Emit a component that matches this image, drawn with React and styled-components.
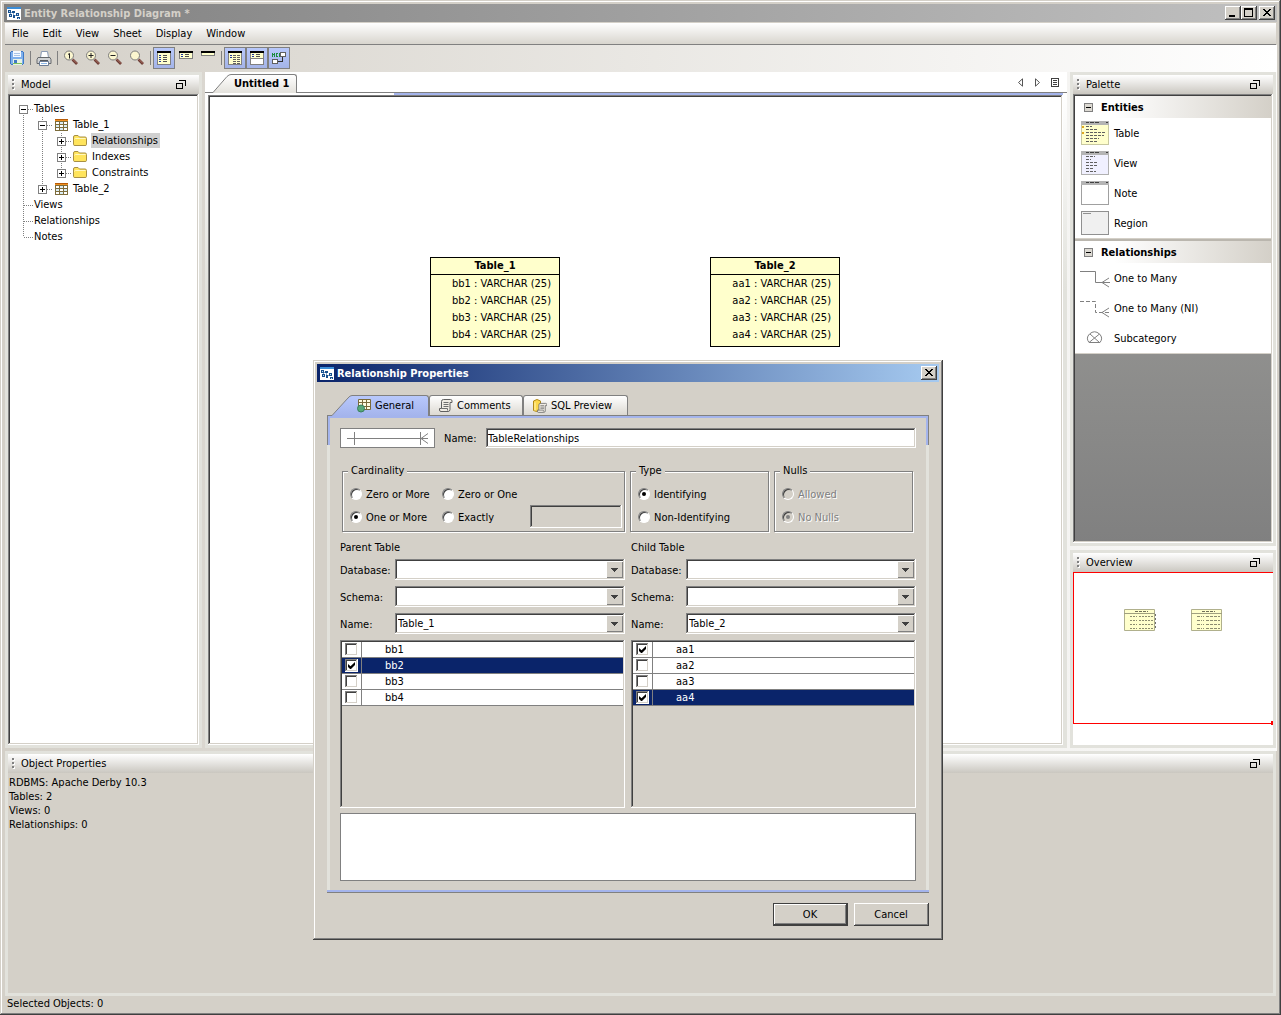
import React, { useState } from "react";
import styled, { createGlobalStyle, css } from "styled-components";

const GlobalStyle = createGlobalStyle`
  *, *::before, *::after {
    box-sizing: border-box;
  }

  body {
    margin: 0;
    background: #d4d0c8;
  }

  body, button, input, select, textarea {
    font-family: "DejaVu Sans Condensed", "DejaVu Sans", sans-serif;
    font-size: 11px;
    line-height: 14px;
    color: #000;
  }

  button, input, select, textarea {
    margin: 0;
    border-radius: 0;
  }

  svg {
    display: block;
    flex: none;
  }
`;

/* the bevels are 2px deep, so anything inside needs at least 2px of padding */
const sunken = css`
  border: 0;
  box-shadow: inset -1px -1px #fff, inset 1px 1px #808080,
    inset -2px -2px #d4d0c8, inset 2px 2px #404040;
`;

const raised = css`
  box-shadow: inset -1px -1px #404040, inset 1px 1px #fff,
    inset -2px -2px #808080;
`;

/* Window frame */

const Frame = styled.div`
  position: relative;
  display: flex;
  flex-direction: column;
  min-height: 100vh;
  padding: 4px;
  background: #d4d0c8;
  box-shadow: inset -1px -1px #404040, inset 1px 1px #d4d0c8,
    inset -2px -2px #808080, inset 2px 2px #fff;
`;

const TitleBar = styled.header`
  display: flex;
  align-items: center;
  height: 18px;
  padding: 0 2px 0 3px;
  background: ${props =>
    props.$active
      ? "linear-gradient(to right, #0a246a, #a6caf0)"
      : "linear-gradient(to right, #808080, #c0c0c0)"};
  color: ${props => (props.$active ? "#fff" : "#d4d0c8")};
`;

const TitleText = styled.h1`
  flex: 1;
  margin: 0 0 0 3px;
  padding-top: 2px;
  font-size: 11px;
  line-height: 14px;
  font-weight: bold;
`;

const TitleButton = styled.button`
  width: 16px;
  height: 14px;
  padding: 0;
  border: 0;
  background: #d4d0c8;
  ${raised}

  & + &:last-child {
    margin-left: 2px;
  }
`;

const MenuBar = styled.nav`
  display: flex;
  align-items: center;
  height: 22px;
  margin: 1px 1px 0;
  border-bottom: 1px solid #808080;
  background: linear-gradient(#fff, #d8d5ce);
`;

const MenuItem = styled.button`
  padding: 2px 7px;
  border: 0;
  background: none;
`;

const Toolbar = styled.div`
  display: flex;
  align-items: center;
  height: 27px;
  padding: 0 2px 1px;
  background: linear-gradient(to right, #d4d0c8, #fff);
`;

const ToolButton = styled.button`
  display: flex;
  align-items: center;
  justify-content: center;
  width: 22px;
  height: 22px;
  padding: 0;
  border: 1px solid ${props => (props.$pressed ? "#808080" : "transparent")};
  background: ${props =>
    props.$pressed ? "linear-gradient(#b8c8fa, #a4b4e8)" : "none"};
`;

const ToolSeparator = styled.span`
  width: 1px;
  height: 14px;
  margin: 0 2px;
  background: #808080;
`;

/* Docked panels */

const Workspace = styled.main`
  flex: 1;
  display: flex;
  gap: 3px;
  padding: 0 1px 3px;
  background: linear-gradient(to right, #d4d0c8, #fbfbfa);
`;

const PanelFrame = styled.section`
  display: flex;
  flex-direction: column;
  border: 3px solid #e2e2dc;
  background: #d4d0c8;
`;

const ModelPanel = styled(PanelFrame)`
  width: 197px;
`;

const SideColumn = styled.div`
  display: flex;
  flex-direction: column;
  gap: 4px;
  width: 206px;
`;

const PalettePanel = styled(PanelFrame)`
  flex: 1;
`;

const PropertiesPanel = styled(PanelFrame)`
  height: 245px;
  margin: 0 1px;
`;

const PanelHeader = styled.div`
  display: flex;
  align-items: center;
  height: 19px;
  padding: 0 13px 0 4px;
  background: linear-gradient(#fff, #cac7c0);
`;

const PanelTitle = styled.h2`
  flex: 1;
  margin: 0 0 0 6px;
  font-size: 11px;
  line-height: 14px;
  font-weight: normal;
`;

const FloatButton = styled.button`
  padding: 0;
  border: 0;
  background: none;
`;

const PropertyList = styled.ul`
  margin: 0;
  padding: 3px 1px;
  list-style: none;
`;

const StatusBar = styled.footer`
  height: 15px;
  padding: 1px 3px 0;
`;

/* Model tree */

const Tree = styled.ul`
  flex: 1;
  margin: 0;
  padding: 7px 6px;
  list-style: none;
  background: #fff;
  ${sunken}
`;

const TreeRow = styled.li`
  display: flex;
  align-items: center;
  height: 16px;
`;

const dots = direction =>
  `repeating-linear-gradient(to ${direction}, #808080 0 1px, transparent 1px 2px)`;

const Guide = styled.span`
  display: flex;
  align-items: center;
  justify-content: center;
  flex: none;
  width: 19px;
  height: 16px;
  background-image: ${props => (props.$up ? dots("bottom") : "none")},
    ${props => (props.$down ? dots("bottom") : "none")},
    ${props => (props.$right ? dots("right") : "none")};
  background-size: 1px 8px, 1px 8px, 9px 1px;
  background-position: 9px 0, 9px 8px, 10px 8px;
  background-repeat: no-repeat;
`;

const TreeIcon = styled.span`
  width: 16px;
  margin: 0 2px;
`;

const TreeLabel = styled.span`
  align-self: flex-start;
  height: 15px;
  padding: 1px 2px 0 1px;
  background: ${props => (props.$selected ? "#d0d0d0" : "none")};
`;

/* Diagram sheet */

const Sheet = styled.section`
  flex: 1;
  display: flex;
  flex-direction: column;
  background: #fff;
`;

const SheetTabs = styled.div`
  display: flex;
  align-items: flex-end;
  height: 21px;
  padding: 0 8px;
  border-bottom: 1px solid #808080;
  background: #fff;
`;

const SheetTab = styled.button`
  display: flex;
  height: 19px;
  margin-bottom: -1px;
  padding: 0;
  border: 0;
  background: none;
  font-weight: bold;
`;

const SheetTabLabel = styled.span`
  height: 19px;
  padding: 2px 7px 0 3px;
  border-top: 1px solid #808080;
  border-right: 1px solid #808080;
  border-top-right-radius: 3px;
  background: linear-gradient(#fff, #e4e2dc);
`;

const SheetTools = styled.div`
  display: flex;
  align-items: center;
  gap: 10px;
  height: 20px;
  margin-left: auto;
`;

const SheetBody = styled.div`
  flex: 1;
  display: flex;
  padding: 2px 4px 3px 3px;
  background: linear-gradient(to right, #fff 0 22%, #a4b4ec 22%)
      no-repeat 0 0 / calc(100% - 4px) 2px,
    linear-gradient(#fff, #e2e2dc 30%);
`;

const Canvas = styled.div`
  position: relative;
  flex: 1;
  background: #fff;
  ${sunken}
`;

const EntityNode = styled.article`
  position: absolute;
  left: ${props => props.$x}px;
  top: ${props => props.$y}px;
  width: 130px;
  height: 90px;
  border: 1px solid #000;
  background: #ffffcc;
`;

const EntityTitle = styled.h3`
  margin: 0;
  border-bottom: 1px solid #000;
  font-size: 11px;
  line-height: 16px;
  text-align: center;
`;

const EntityField = styled.div`
  padding-right: 8px;
  line-height: 17px;
  text-align: right;
`;

/* Palette */

const PaletteBody = styled.div`
  flex: 1;
  padding: 2px;
  background: linear-gradient(#a4a4a0, #808080);
  ${sunken}
`;

const PaletteGroup = styled.div`
  border-bottom: 1px solid #d4d0c8;
  background: #fff;

  & + & {
    border-top: 2px solid #bab6ae;
  }
`;

const PaletteHeading = styled.button`
  display: flex;
  align-items: center;
  gap: 8px;
  width: 100%;
  height: 22px;
  padding: 0 9px;
  border: 0;
  background: linear-gradient(to right, #fff 20%, #d4d0c8);
  font-weight: bold;
`;

const PaletteItem = styled.button`
  display: flex;
  align-items: center;
  gap: 4px;
  width: 100%;
  height: 30px;
  padding: 0 5px;
  border: 0;
  background: #fff;
`;

const Caption = styled.span`
  padding-top: 2px;
`;

const OverviewBody = styled.div`
  height: 173px;
  background: #fff;
`;

const OverviewPage = styled.div`
  position: relative;
  display: flex;
  gap: 35px;
  height: 152px;
  padding: 36px 0 0 50px;
  border: 1px solid #f00;
  border-right: 0;

  &::after {
    content: "";
    position: absolute;
    right: 0;
    bottom: -2px;
    width: 2px;
    height: 4px;
    background: #f00;
  }
`;

/* Dialog */

const DialogFrame = styled.div`
  position: absolute;
  left: 313px;
  top: 360px;
  width: 630px;
  padding: 4px;
  background: #d4d0c8;
  box-shadow: inset -1px -1px #404040, inset 1px 1px #d4d0c8,
    inset -2px -2px #808080, inset 2px 2px #fff;
`;

const DialogContent = styled.form`
  padding: 13px 10px 10px;
`;

const DialogTabs = styled.div`
  display: flex;
  height: 21px;
  margin-bottom: -1px;
  padding-left: 5px;
`;

const DialogTab = styled.button`
  display: flex;
  align-items: center;
  gap: 4px;
  width: ${props => props.$width}px;
  height: 20px;
  padding: 0 0 0 9px;
  border: 1px solid #808080;
  border-bottom: 0;
  border-radius: 3px 3px 0 0;
  background: linear-gradient(#fff, #dcd9d2);
  white-space: nowrap;

  ${props =>
    props.$active &&
    css`
      height: 21px;
      padding-left: 5px;
      border-left: 0;
      border-radius: 0 3px 0 0;
      background: linear-gradient(#b8c8fc, #a4b4ec);
    `}
`;

const line = (color, position, size) =>
  `linear-gradient(${color}, ${color}) ${position} / ${size} no-repeat`;

const TabPage = styled.div`
  padding: 13px 13px 12px;
  background: ${[
    line("#808080", "0 100%", "100% 1px"),
    line("#a4b4ec", "0 calc(100% - 1px)", "100% 2px"),
    line("#808080", "0 0", "100% 1px"),
    line("#808080", "0 0", "1px 30px"),
    line("#808080", "100% 0", "1px 30px"),
    line("#a4b4ec", "0 0", "3px 30px"),
    line("#a4b4ec", "100% 0", "3px 30px"),
    line("#a4b4ec", "0 1px", "100% 2px"),
    line("#e2e2dc", "0 0", "3px 100%"),
    line("#e2e2dc", "100% 0", "3px 100%")
  ].join(", ")};
`;

const NameRow = styled.div`
  display: flex;
  align-items: center;
  gap: 9px;
  height: 20px;
`;

const RelationPreview = styled.div`
  width: 95px;
  height: 20px;
  border: 1px solid #808080;
  background: #fff;
`;

const NameLabel = styled.label`
  width: 33px;
  padding-top: 2px;
  white-space: nowrap;
`;

const TextField = styled.input`
  flex: 1;
  width: 100%;
  height: 20px;
  padding: 2px 2px 1px;
  background: ${props => (props.disabled ? "#d4d0c8" : "#fff")};
  ${sunken}
`;

const OptionRow = styled.div`
  display: grid;
  grid-template-columns: minmax(0, 1fr) 139px 139px;
  gap: 5px;
  margin: 16px 3px 8px 2px;
`;

const OptionGroup = styled.fieldset`
  display: grid;
  grid-template-columns: ${props => (props.$wide ? "92px 88px 1fr" : "1fr")};
  grid-auto-rows: 23px;
  align-items: center;
  min-width: 0;
  margin: 0;
  padding: 4px 2px 3px 7px;
  border: 1px solid #808080;
  box-shadow: 1px 1px #fff, inset 1px 1px #fff;
`;

const Legend = styled.legend`
  padding: 0 3px;
  margin-left: -2px;
  background: #d4d0c8;
`;

const RadioLabel = styled.label`
  display: flex;
  align-items: center;
  gap: 4px;
  color: ${props => (props.$disabled ? "#808080" : "#000")};
  text-shadow: ${props => (props.$disabled ? "1px 1px #fff" : "none")};
  white-space: nowrap;
`;

const Radio = styled.input`
  appearance: none;
  display: grid;
  place-items: center;
  flex: none;
  width: 12px;
  height: 12px;
  border: 1px solid;
  border-color: #808080 #fff #fff #808080;
  border-radius: 50%;
  background: ${props => (props.disabled ? "#d4d0c8" : "#fff")};
  box-shadow: inset 1px 1px #404040;

  &:checked::after {
    content: "";
    width: 4px;
    height: 4px;
    border-radius: 50%;
    background: ${props => (props.disabled ? "#808080" : "#000")};
  }
`;

const ExactField = styled(TextField)`
  grid-column: 3;
  grid-row: 2;
  height: 23px;
`;

const TablePair = styled.div`
  display: grid;
  grid-template-columns: 1fr 1fr;
  gap: 6px;
`;

const SideTitle = styled.h4`
  margin: 0 0 4px;
  padding-top: 1px;
  font-size: 11px;
  line-height: 14px;
  font-weight: normal;
`;

const FieldRow = styled.div`
  display: grid;
  grid-template-columns: 55px 1fr;
  align-items: center;
  height: 21px;
  margin-bottom: 6px;
`;

const FieldLabel = styled.label`
  padding-top: 2px;
`;

const SelectBox = styled.div`
  display: grid;
  height: 21px;
  padding: 2px;
  background: #fff;
  ${sunken}

  & > * {
    grid-area: 1 / 1;
  }
`;

const Select = styled.select`
  appearance: none;
  width: 100%;
  height: 17px;
  padding: 1px 18px 0 1px;
  border: 0;
  outline: 0;
  background: none;
`;

const SelectArrow = styled.span`
  display: flex;
  align-items: center;
  justify-content: center;
  justify-self: end;
  width: 17px;
  height: 17px;
  background: #d4d0c8;
  box-shadow: inset 1px 1px #fff, inset -1px -1px #808080;
  pointer-events: none;
`;

const ColumnList = styled.div`
  height: 168px;
  padding: 2px;
  ${sunken}
`;

const ColumnTable = styled.table`
  width: 100%;
  border-spacing: 0;
`;

const ColumnRow = styled.tr`
  height: 16px;
  background: ${props => (props.$selected ? "#0a246a" : "#fff")};
  color: ${props => (props.$selected ? "#fff" : "#000")};
`;

const CheckCell = styled.td`
  width: 20px;
  padding: 0 0 0 3px;
  border-right: 1px solid #808080;
  border-bottom: 1px solid #808080;
`;

const NameCell = styled.td`
  padding: 0 0 0 23px;
  border-bottom: 1px solid #808080;
  line-height: 15px;
`;

const CheckBox = styled.input`
  appearance: none;
  display: grid;
  place-items: center;
  width: 13px;
  height: 13px;
  background: #fff;
  ${sunken}

  &:checked::after {
    content: "";
    width: 7px;
    height: 7px;
    background: #000;
    clip-path: polygon(0 29%, 0 70%, 29% 100%, 43% 100%, 100% 43%, 100% 0, 36% 62%);
  }
`;

const Description = styled.textarea`
  display: block;
  width: 100%;
  height: 68px;
  margin-top: 5px;
  border: 1px solid #808080;
  background: #fff;
  resize: none;
`;

const DialogButtons = styled.div`
  display: flex;
  justify-content: flex-end;
  gap: 6px;
  margin-top: 10px;
`;

const DialogButton = styled.button`
  width: 75px;
  height: 23px;
  padding: 0 1px 0 0;
  border: ${props => (props.$default ? "1px solid #404040" : "0")};
  background: #d4d0c8;
  ${raised}
`;

/* Icons */

const AppIcon = () => (
  <svg width="14" height="13" viewBox="0 0 14 13" shapeRendering="crispEdges">
    <rect width="14" height="13" fill="#fff" />
    <rect width="14" height="2" fill="#3c8ed8" />
    <path d="M3 4h1v1h2v1H4v2H3zM6 6h1v2h2v1H6z" fill="#7ca4cc" />
    <path
      d="M1 3h3v3H1zM5 4h3v2H5zM2 7h3v3H2zM6 8h2v3H6zM9 6h3v3H9zM10 10h3v2h-3z"
      fill="#17518f"
    />
    <path d="M2 4h1v1H2zM10 7h1v1h-1zM11 11h1v1h-1zM3 8h1v1H3z" fill="#bcd8f4" />
  </svg>
);

const MinimizeIcon = () => (
  <svg width="16" height="14" viewBox="0 0 16 14">
    <path d="M4 9h6v2H4z" />
  </svg>
);

const MaximizeIcon = () => (
  <svg width="16" height="14" viewBox="0 0 16 14">
    <path d="M3 2h9v9H3zM4 4v6h7V4z" fillRule="evenodd" />
  </svg>
);

const CloseIcon = () => (
  <svg width="16" height="14" viewBox="0 0 16 14" shapeRendering="crispEdges">
    <path d="M4 3h2v1h1v1h2V4h1V3h2v1h-1v1h-1v1H9v1h1v1h1v1h1v1h-2V9H9V8H7v1H6v1H4V9h1V8h1V7h1V6H6V5H5V4H4z" />
  </svg>
);

const FloatIcon = () => (
  <svg width="10" height="9" viewBox="0 0 10 9" shapeRendering="crispEdges">
    <path d="M3 0h7v6H9V1H3zM0 3h7v6H0zM1 4v4h5V4z" fillRule="evenodd" />
  </svg>
);

const Grip = () => (
  <svg width="3" height="11" viewBox="0 0 3 11" shapeRendering="crispEdges">
    <path d="M1 1h2v2H1zM1 5h2v2H1zM1 9h2v2H1z" fill="#fff" />
    <path d="M0 0h2v2H0zM0 4h2v2H0zM0 8h2v2H0z" fill="#808080" />
  </svg>
);

const SaveIcon = () => (
  <svg width="14" height="14" viewBox="0 0 14 14" shapeRendering="crispEdges">
    <path d="M1 0h12v1h1v12h-1v1H1v-1H0V1h1z" fill="#3f78c4" />
    <path d="M1 1h12v12H1z" fill="#7fb0ec" />
    <path d="M3 0h8v6H3z" fill="#f4f9ff" />
    <path d="M4 2h6v1H4zM4 4h6v1H4z" fill="#a9c4e6" />
    <path d="M3 8h9v6H3z" fill="#e8f2e4" />
    <path d="M4 9h3v4H4z" fill="#3f78c4" />
    <path d="M3 12h9v1H3z" fill="#7cc05c" />
  </svg>
);

const PrintIcon = () => (
  <svg width="16" height="15" viewBox="0 0 16 15">
    <path d="M4.5 6.5l1-6h6l1 6z" fill="#fff" stroke="#8a9ab4" />
    <path d="M2 6.500h12l1 2v4H1v-4z" fill="#d0d2d4" stroke="#66696c" />
    <path d="M4 9h8v1H4z" fill="#55585c" />
    <path d="M3.500 10.500h9v4h-9z" fill="#fff" stroke="#6c7c94" />
    <path d="M5 12.500h6" stroke="#8cb8e8" />
  </svg>
);

const ZoomIcon = ({ mark }) => (
  <svg width="16" height="16" viewBox="0 0 16 16">
    <path d="M9.500 9.500l4.500 4.500" stroke="#6c3c34" strokeWidth="2.600" />
    <path d="M10 9.500l4 4" stroke="#b07468" strokeWidth="1" />
    <circle cx="6" cy="5.500" r="4.500" fill="#fbf6cf" stroke="#7c7c7c" />
    {mark && <path d={mark} stroke="#222" strokeWidth="1" fill="none" />}
  </svg>
);

const DetailIcon = ({ rows, tall, split }) => (
  <svg width="16" height="16" viewBox="0 0 16 16" shapeRendering="crispEdges">
    <path d={`M1.500 1.500h13v${tall}h-13z`} fill="#ffffcc" stroke="#808080" />
    {split && <path d="M2 8h12v6H2z" fill="#fff" />}
    {split && <path d="M2 8h12v1H2z" fill="#808080" />}
    <path d="M1 1h14v2H1z" fill="#000" />
    {rows.map(y => (
      <g key={y}>
        <path d={`M3 ${y}h2v1H3z`} fill="#2038a0" />
        <path d={`M7 ${y}h4v1H7z`} fill="#505050" />
      </g>
    ))}
  </svg>
);

const HeaderOnlyIcon = () => (
  <svg width="16" height="16" viewBox="0 0 16 16" shapeRendering="crispEdges">
    <path d="M1.500 1.500h13v4h-13z" fill="#ffffcc" stroke="#808080" />
    <path d="M1 1h14v2H1z" />
  </svg>
);

const ColumnsIcon = () => (
  <svg width="16" height="16" viewBox="0 0 16 16" shapeRendering="crispEdges">
    <path d="M1.500 1.500h13v13h-13z" fill="#ffffcc" stroke="#808080" />
    <path d="M1 1h14v2H1z" />
    <path d="M3 5h2v1H3zM3 7h2v1H3z" fill="#2038a0" />
    <path
      d="M6 5h3v1H6zM10 5h3v1h-3zM6 7h3v1H6zM10 7h3v1h-3zM6 9h3v1H6zM10 9h3v1h-3zM6 11h3v1H6zM10 11h3v1h-3zM6 13h3v1H6zM10 13h3v1h-3z"
      fill="#606060"
    />
  </svg>
);

const KeysIcon = () => (
  <svg width="16" height="16" viewBox="0 0 16 16" shapeRendering="crispEdges">
    <path d="M1.500 9.500h5v4h-5z" fill="#fff" stroke="#606060" />
    <path d="M9.500 2.500h5v4h-5z" fill="#fff" stroke="#606060" />
    <path d="M7 11.500h4.500v-5" stroke="#303030" fill="none" />
    <path
      d="M1 3h1v4H1zM2 4h1v1H2zM3 3h1v4H3zM5 3h2v1H5zM5 4h1v2H5zM5 6h2v1H5zM8 3h1v4H8z"
      fill="#1c8c3c"
    />
  </svg>
);

const TreeToggle = ({ open }) => (
  <svg width="9" height="9" viewBox="0 0 9 9" shapeRendering="crispEdges">
    <path d="M.5.5h8v8h-8z" fill="#fff" stroke="#808080" />
    <path d={open ? "M2 4h5v1H2z" : "M2 4h5v1H2zM4 2h1v5H4z"} />
  </svg>
);

const GridIcon = () => (
  <svg width="16" height="13" viewBox="0 0 16 13" shapeRendering="crispEdges">
    <path d="M1 0h13v12H1z" fill="#7c6c3c" />
    <path d="M1 0h13v2H1z" fill="#f09020" />
    <path d="M1 0h13v1H1z" fill="#b85c08" />
    <path
      d="M2 3h3v2H2zM6 3h3v2H6zM10 3h3v2h-3zM2 6h3v2H2zM6 6h3v2H6zM10 6h3v2h-3zM2 9h3v2H2zM6 9h3v2H6zM10 9h3v2h-3z"
      fill="#fff"
    />
    <path d="M6 3h3v2H6zM2 6h3v2H2zM10 6h3v2h-3zM6 9h3v2H6z" fill="#d8ecf4" />
  </svg>
);

const FolderIcon = () => (
  <svg width="16" height="12" viewBox="0 0 16 12">
    <path
      d="M.5 2q0-1.500 1.500-1.500h3L6.500 2H12q1.500 0 1.500 1.500v6q0 1-1.500 1H2q-1.500 0-1.500-1z"
      fill="#ffe45c"
      stroke="#a89044"
    />
    <path d="M1.500 4.500q0-1 1-1h10" stroke="#fff8c0" fill="none" />
  </svg>
);

const PrevIcon = () => (
  <svg width="7" height="9" viewBox="0 0 7 9">
    <path d="M5.500.8v7.400L1.500 4.500z" fill="#fff" stroke="#555" />
  </svg>
);

const NextIcon = () => (
  <svg width="7" height="9" viewBox="0 0 7 9">
    <path d="M1.500.8v7.400l4-3.700z" fill="#fff" stroke="#555" />
  </svg>
);

const ListIcon = () => (
  <svg width="8" height="9" viewBox="0 0 8 9" shapeRendering="crispEdges">
    <path d="M.5.5h7v8h-7z" fill="#fff" stroke="#404040" />
    <path d="M2 2h4v1H2zM2 4h4v1H2zM2 6h4v1H2z" fill="#404040" />
  </svg>
);

const SheetTabEdge = () => (
  <svg width="18" height="19" viewBox="0 0 18 19">
    <defs>
      <linearGradient id="sheetEdge" x2="0" y2="1">
        <stop stopColor="#fff" />
        <stop offset="1" stopColor="#e4e2dc" />
      </linearGradient>
    </defs>
    <path d="M0 18.500L14 2.500Q16 .5 18 .5V19H0z" fill="url(#sheetEdge)" />
    <path d="M0 18.500L14 2.500Q16 .5 18 .5" fill="none" stroke="#808080" />
  </svg>
);

const DialogTabEdge = () => (
  <svg width="20" height="21" viewBox="0 0 20 21">
    <defs>
      <linearGradient id="dialogEdge" x2="0" y2="1">
        <stop stopColor="#b8c8fc" />
        <stop offset="1" stopColor="#a4b4ec" />
      </linearGradient>
    </defs>
    <path d="M0 20.500L16 3Q18 .5 20 .5V21H0z" fill="url(#dialogEdge)" />
    <path d="M0 20.500L16 3Q18 .5 20 .5" fill="none" stroke="#808080" />
  </svg>
);

const GeneralIcon = () => (
  <svg width="14" height="14" viewBox="0 0 14 14">
    <path d="M1.500.5h12v10h-12z" fill="#fffbe0" stroke="#7a6a3a" />
    <path d="M5.500.5v10M9.500.5v10M1.500 3.500h12M1.500 7.500h12" stroke="#7a6a3a" />
    <circle cx="4" cy="9.500" r="3.500" fill="#58a878" stroke="#38805c" />
  </svg>
);

const ScrollShape = () => (
  <g>
    <path
      d="M2.500 9.500V2.500q0-2 2-2h7q1.500 0 1.500 1.500v1.500h-2v7q0 2-2 2H2Q.5 12.500.5 11V9.500z"
      fill="#f0ece4"
      stroke="#606060"
    />
    <path
      d="M4.500 3.500h5M4.500 5.500h5M4.500 7.500h5M2.500 9.500h6v2"
      stroke="#707070"
      fill="none"
    />
  </g>
);

const CommentsIcon = () => (
  <svg width="14" height="14" viewBox="0 0 14 14">
    <ScrollShape />
  </svg>
);

const SqlIcon = () => (
  <svg width="14" height="14" viewBox="0 0 14 14">
    <path d="M.5 2v9.500q3 2 7 0V2q-3.500-3-7 0z" fill="#fcd84c" stroke="#b08818" />
    <path d="M2 3.500v8" stroke="#fff6b8" />
    <g transform="translate(4 4) scale(.75)">
      <ScrollShape />
    </g>
  </svg>
);

const RelationLine = () => (
  <svg width="93" height="18" viewBox="0 0 93 18">
    <path
      d="M6 9.500h81M13.500 3v13M79.500 3v13M87 4.500l-7 5 7 5"
      fill="none"
      stroke="#808080"
    />
  </svg>
);

const DropArrow = () => (
  <svg width="7" height="4" viewBox="0 0 7 4" shapeRendering="crispEdges">
    <path d="M0 0h7v1H6v1H5v1H4v1H3V3H2V2H1V1H0z" fill="#404040" />
  </svg>
);

const GroupToggle = () => (
  <svg width="9" height="9" viewBox="0 0 9 9" shapeRendering="crispEdges">
    <path d="M.5.5h8v8h-8z" fill="#dcd9d2" stroke="#808080" />
    <path d="M2 4h5v1H2z" />
  </svg>
);

const EntityThumb = ({ fill, stroke, lines, keyed }) => (
  <svg width="30" height="24" viewBox="0 0 30 24" shapeRendering="crispEdges">
    <path d="M1.500.5h27v23h-27z" fill={fill} stroke={stroke} />
    <path d="M1 0h28v4H1z" fill="#b4b4b4" />
    <path d="M6 1.500h3m1 0h4m1 0h4M26 1.500h2" stroke="#404040" />
    {lines.map(([x, width], i) => (
      <path
        key={i}
        d={`M${x} ${i * 3 + 5.5}h${width}`}
        stroke="#606060"
        strokeDasharray="3 1"
      />
    ))}
    {keyed && <path d="M2 5h2v2H2zM2 11h2v2H2z" fill="#e0a820" />}
  </svg>
);

const RegionThumb = () => (
  <svg width="30" height="24" viewBox="0 0 30 24" shapeRendering="crispEdges">
    <path d="M1.500.5h27v23h-27z" fill="#f0f0f0" stroke="#909090" />
    <path d="M3 2.500h8" stroke="#909090" />
  </svg>
);

const ManyThumb = ({ dashed }) => (
  <svg width="30" height="20" viewBox="0 0 30 20">
    <path
      d="M0 3.500h15.500v11H30"
      fill="none"
      stroke="#808080"
      strokeDasharray={dashed ? "4 2" : "none"}
    />
    <path d="M29 10l-7 4.500 7 4.500" fill="none" stroke="#808080" />
  </svg>
);

const SubcategoryThumb = () => (
  <svg width="30" height="20" viewBox="0 0 30 20">
    <path
      d="M9 14.500Q5.500 10 9.500 6q5-4.500 10 0 4 4 .5 8.500zM10 6l9.500 8.500M19.500 6L9 14.500"
      fill="none"
      stroke="#808080"
    />
  </svg>
);

const MiniEntity = ({ wide }) => (
  <svg width="32" height="22" viewBox="0 0 32 22">
    <path d="M.5.5h30v21H.5z" fill="#ffffcc" stroke="#b0b08c" />
    <path d="M0 4.500h31" stroke="#a0a080" />
    <path d="M11 2.500h13" stroke="#707058" strokeDasharray="3 1" />
    <path
      d="M6 7.500h5m1 0h1m2 0h14M6 11.500h5m1 0h1m2 0h14M6 15.500h5m1 0h1m2 0h14M6 19.500h5m1 0h1m2 0h14"
      stroke="#8c8c70"
      strokeDasharray={wide ? "2 1" : "3 1"}
    />
    {wide && <path d="M31.500 5v16" stroke="#707070" strokeDasharray="2 2" />}
  </svg>
);

/* Data */

const MENUS = ["File", "Edit", "View", "Sheet", "Display", "Window"];

const TREE = [
  { label: "Tables", guides: [{ down: true, right: true, toggle: "open" }] },
  {
    label: "Table_1",
    icon: <GridIcon />,
    guides: [
      { up: true, down: true },
      { up: true, down: true, right: true, toggle: "open" }
    ]
  },
  ...["Relationships", "Indexes", "Constraints"].map((label, i) => ({
    label,
    icon: <FolderIcon />,
    selected: i === 0,
    guides: [
      { up: true, down: true },
      { up: true, down: true },
      { up: true, down: i < 2, right: true, toggle: "closed" }
    ]
  })),
  {
    label: "Table_2",
    icon: <GridIcon />,
    guides: [
      { up: true, down: true },
      { up: true, right: true, toggle: "closed" }
    ]
  },
  { label: "Views", guides: [{ up: true, down: true, right: true }] },
  { label: "Relationships", guides: [{ up: true, down: true, right: true }] },
  { label: "Notes", guides: [{ up: true, right: true }] }
];

const ENTITIES = [
  { name: "Table_1", x: 222, y: 162, fields: ["bb1", "bb2", "bb3", "bb4"] },
  { name: "Table_2", x: 502, y: 162, fields: ["aa1", "aa2", "aa3", "aa4"] }
];

const PALETTE = [
  {
    title: "Entities",
    items: [
      {
        label: "Table",
        icon: (
          <EntityThumb
            fill="#ffffcc"
            stroke="#c8c8a0"
            lines={[[6, 6], [6, 12], [6, 20], [6, 18], [6, 13], [6, 11]]}
            keyed
          />
        )
      },
      {
        label: "View",
        icon: (
          <EntityThumb
            fill="#f0f0ff"
            stroke="#b0b0b0"
            lines={[[6, 9], [6, 5], [6, 11], [6, 11], [6, 8], [6, 10]]}
          />
        )
      },
      {
        label: "Note",
        icon: <EntityThumb fill="#fff" stroke="#a0a0a0" lines={[]} />
      },
      { label: "Region", icon: <RegionThumb /> }
    ]
  },
  {
    title: "Relationships",
    items: [
      { label: "One to Many", icon: <ManyThumb /> },
      { label: "One to Many (NI)", icon: <ManyThumb dashed /> },
      { label: "Subcategory", icon: <SubcategoryThumb /> }
    ]
  }
];

const SIDES = [
  {
    id: "parent",
    title: "Parent Table",
    table: "Table_1",
    columns: ["bb1", "bb2", "bb3", "bb4"],
    checked: ["bb2"],
    selected: "bb2"
  },
  {
    id: "child",
    title: "Child Table",
    table: "Table_2",
    columns: ["aa1", "aa2", "aa3", "aa4"],
    checked: ["aa1", "aa4"],
    selected: "aa4"
  }
];

/* Components */

const Header = ({ title }) => (
  <PanelHeader>
    <Grip />
    <PanelTitle>{title}</PanelTitle>
    <FloatButton aria-label={`Float ${title}`}>
      <FloatIcon />
    </FloatButton>
  </PanelHeader>
);

const Tools = () => (
  <Toolbar>
    <ToolButton aria-label="Save">
      <SaveIcon />
    </ToolButton>
    <ToolSeparator />
    <ToolButton aria-label="Print">
      <PrintIcon />
    </ToolButton>
    <ToolSeparator />
    <ToolButton aria-label="Actual size">
      <ZoomIcon mark="M5 4.500l1.500-1v5" />
    </ToolButton>
    <ToolButton aria-label="Zoom in">
      <ZoomIcon mark="M3.500 5.500h5M6 3v5" />
    </ToolButton>
    <ToolButton aria-label="Zoom out">
      <ZoomIcon mark="M3.500 5.500h5" />
    </ToolButton>
    <ToolButton aria-label="Zoom to fit">
      <ZoomIcon />
    </ToolButton>
    <ToolSeparator />
    <ToolButton $pressed aria-label="Show all details">
      <DetailIcon rows={[5, 7, 9, 11]} tall={13} />
    </ToolButton>
    <ToolButton aria-label="Show keys only">
      <DetailIcon rows={[4, 6]} tall={7} />
    </ToolButton>
    <ToolButton aria-label="Show names only">
      <HeaderOnlyIcon />
    </ToolButton>
    <ToolSeparator />
    <ToolButton $pressed aria-label="Show column types">
      <ColumnsIcon />
    </ToolButton>
    <ToolButton $pressed aria-label="Show key section">
      <DetailIcon rows={[4, 6]} tall={13} split />
    </ToolButton>
    <ToolButton $pressed aria-label="Show relationship names">
      <KeysIcon />
    </ToolButton>
  </Toolbar>
);

const ModelTree = () => (
  <Tree>
    {TREE.map((node, index) => (
      <TreeRow key={index}>
        {node.guides.map((guide, i) => (
          <Guide
            key={i}
            $up={guide.up}
            $down={guide.down}
            $right={guide.right}
          >
            {guide.toggle && <TreeToggle open={guide.toggle === "open"} />}
          </Guide>
        ))}
        {node.icon && <TreeIcon>{node.icon}</TreeIcon>}
        <TreeLabel $selected={node.selected}>{node.label}</TreeLabel>
      </TreeRow>
    ))}
  </Tree>
);

const Combo = ({ id, label, options = [""] }) => (
  <FieldRow>
    <FieldLabel htmlFor={id}>{label}</FieldLabel>
    <SelectBox>
      <Select id={id}>
        {options.map(option => (
          <option key={option}>{option}</option>
        ))}
      </Select>
      <SelectArrow>
        <DropArrow />
      </SelectArrow>
    </SelectBox>
  </FieldRow>
);

const Option = ({ group, label, checked, disabled }) => (
  <RadioLabel $disabled={disabled}>
    <Radio
      type="radio"
      name={group}
      defaultChecked={checked}
      disabled={disabled}
    />
    <Caption>{label}</Caption>
  </RadioLabel>
);

const TableSide = ({ side }) => {
  const [checked, setChecked] = useState(side.checked);

  const toggle = column =>
    setChecked(
      checked.includes(column)
        ? checked.filter(name => name !== column)
        : [...checked, column]
    );

  return (
    <div>
      <SideTitle>{side.title}</SideTitle>
      <Combo id={`${side.id}-database`} label="Database:" />
      <Combo id={`${side.id}-schema`} label="Schema:" />
      <Combo id={`${side.id}-name`} label="Name:" options={[side.table]} />
      <ColumnList>
        <ColumnTable>
          <tbody>
            {side.columns.map(column => (
              <ColumnRow key={column} $selected={column === side.selected}>
                <CheckCell>
                  <CheckBox
                    type="checkbox"
                    id={`${side.id}-${column}`}
                    checked={checked.includes(column)}
                    onChange={() => toggle(column)}
                  />
                </CheckCell>
                <NameCell>
                  <label htmlFor={`${side.id}-${column}`}>{column}</label>
                </NameCell>
              </ColumnRow>
            ))}
          </tbody>
        </ColumnTable>
      </ColumnList>
    </div>
  );
};

const RelationshipDialog = () => (
  <DialogFrame role="dialog" aria-label="Relationship Properties">
    <TitleBar $active>
      <AppIcon />
      <TitleText as="h2">Relationship Properties</TitleText>
      <TitleButton aria-label="Close">
        <CloseIcon />
      </TitleButton>
    </TitleBar>
    <DialogContent onSubmit={event => event.preventDefault()}>
      <DialogTabs>
        <DialogTabEdge />
        <DialogTab type="button" $active $width={77}>
          <GeneralIcon />
          General
        </DialogTab>
        <DialogTab type="button" $width={94}>
          <CommentsIcon />
          Comments
        </DialogTab>
        <DialogTab type="button" $width={105}>
          <SqlIcon />
          SQL Preview
        </DialogTab>
      </DialogTabs>
      <TabPage>
        <NameRow>
          <RelationPreview>
            <RelationLine />
          </RelationPreview>
          <NameLabel htmlFor="relationship-name">Name:</NameLabel>
          <TextField id="relationship-name" defaultValue="TableRelationships" />
        </NameRow>
        <OptionRow>
          <OptionGroup $wide>
            <Legend>Cardinality</Legend>
            <Option group="cardinality" label="Zero or More" />
            <Option group="cardinality" label="Zero or One" />
            <span />
            <Option group="cardinality" label="One or More" checked />
            <Option group="cardinality" label="Exactly" />
            <ExactField disabled aria-label="Exact count" />
          </OptionGroup>
          <OptionGroup>
            <Legend>Type</Legend>
            <Option group="type" label="Identifying" checked />
            <Option group="type" label="Non-Identifying" />
          </OptionGroup>
          <OptionGroup>
            <Legend>Nulls</Legend>
            <Option group="nulls" label="Allowed" disabled />
            <Option group="nulls" label="No Nulls" checked disabled />
          </OptionGroup>
        </OptionRow>
        <TablePair>
          {SIDES.map(side => (
            <TableSide key={side.id} side={side} />
          ))}
        </TablePair>
        <Description aria-label="Description" />
      </TabPage>
      <DialogButtons>
        <DialogButton $default>OK</DialogButton>
        <DialogButton type="button">Cancel</DialogButton>
      </DialogButtons>
    </DialogContent>
  </DialogFrame>
);

export default function App() {
  return (
    <>
      <GlobalStyle />
      <Frame>
        <TitleBar>
          <AppIcon />
          <TitleText>Entity Relationship Diagram *</TitleText>
          <TitleButton aria-label="Minimize">
            <MinimizeIcon />
          </TitleButton>
          <TitleButton aria-label="Maximize">
            <MaximizeIcon />
          </TitleButton>
          <TitleButton aria-label="Close">
            <CloseIcon />
          </TitleButton>
        </TitleBar>
        <MenuBar>
          {MENUS.map(menu => (
            <MenuItem key={menu}>{menu}</MenuItem>
          ))}
        </MenuBar>
        <Tools />
        <Workspace>
          <ModelPanel>
            <Header title="Model" />
            <ModelTree />
          </ModelPanel>
          <Sheet>
            <SheetTabs>
              <SheetTab>
                <SheetTabEdge />
                <SheetTabLabel>Untitled 1</SheetTabLabel>
              </SheetTab>
              <SheetTools>
                <FloatButton aria-label="Previous sheet">
                  <PrevIcon />
                </FloatButton>
                <FloatButton aria-label="Next sheet">
                  <NextIcon />
                </FloatButton>
                <FloatButton aria-label="List sheets">
                  <ListIcon />
                </FloatButton>
              </SheetTools>
            </SheetTabs>
            <SheetBody>
              <Canvas>
                {ENTITIES.map(entity => (
                  <EntityNode key={entity.name} $x={entity.x} $y={entity.y}>
                    <EntityTitle>{entity.name}</EntityTitle>
                    {entity.fields.map(field => (
                      <EntityField key={field}>
                        {field} : VARCHAR (25)
                      </EntityField>
                    ))}
                  </EntityNode>
                ))}
              </Canvas>
            </SheetBody>
          </Sheet>
          <SideColumn>
            <PalettePanel>
              <Header title="Palette" />
              <PaletteBody>
                {PALETTE.map(group => (
                  <PaletteGroup key={group.title}>
                    <PaletteHeading>
                      <GroupToggle />
                      <Caption>{group.title}</Caption>
                    </PaletteHeading>
                    {group.items.map(item => (
                      <PaletteItem key={item.label}>
                        {item.icon}
                        <Caption>{item.label}</Caption>
                      </PaletteItem>
                    ))}
                  </PaletteGroup>
                ))}
              </PaletteBody>
            </PalettePanel>
            <PanelFrame>
              <Header title="Overview" />
              <OverviewBody>
                <OverviewPage>
                  <MiniEntity wide />
                  <MiniEntity />
                </OverviewPage>
              </OverviewBody>
            </PanelFrame>
          </SideColumn>
        </Workspace>
        <PropertiesPanel>
          <Header title="Object Properties" />
          <PropertyList>
            <li>RDBMS: Apache Derby 10.3</li>
            <li>Tables: 2</li>
            <li>Views: 0</li>
            <li>Relationships: 0</li>
          </PropertyList>
        </PropertiesPanel>
        <StatusBar>Selected Objects: 0</StatusBar>
        <RelationshipDialog />
      </Frame>
    </>
  );
}
